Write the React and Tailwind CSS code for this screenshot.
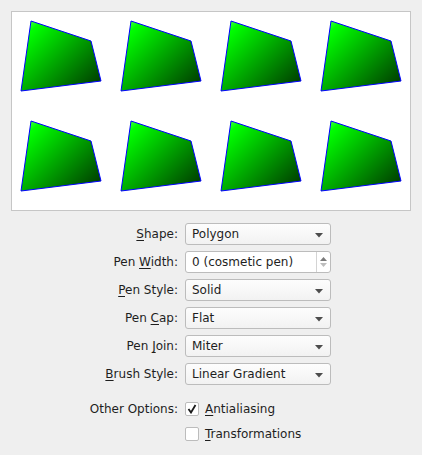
import React from 'react';

const cells = [];
for (let y = 0; y < 200; y += 100) {
  for (let x = 0; x < 400; x += 100) {
    cells.push([x, y]);
  }
}

const U = ({ children }) => (
  <span className="underline underline-offset-2 decoration-1">{children}</span>
);

const ComboArrow = () => (
  <svg width="8" height="5" viewBox="0 0 8 5" className="absolute right-[7px] top-[9px]">
    <path d="M0 0 L8 0 L4 4.5 Z" fill="#4d4d4d" />
  </svg>
);

const Combo = ({ value }) => (
  <div className="relative h-[22px] w-[146px] rounded-[3px] border border-[#bcbcbc] bg-gradient-to-b from-[#fdfdfd] to-[#f2f2f2] pl-[6px] leading-[20px]">
    {value}
    <ComboArrow />
  </div>
);

const SpinBox = ({ value }) => (
  <div className="relative flex h-[22px] w-[146px] rounded-[3px] border border-[#bcbcbc] bg-white">
    <div className="flex-1 pl-[6px] leading-[20px]">{value}</div>
    <div className="flex w-[14px] flex-col items-center justify-center gap-[2px] border-l border-[#d4d4d4]">
      <svg width="7" height="4" viewBox="0 0 7 4">
        <path d="M0 4 L7 4 L3.5 0 Z" fill="#7a7a7a" />
      </svg>
      <svg width="7" height="4" viewBox="0 0 7 4">
        <path d="M0 0 L7 0 L3.5 4 Z" fill="#bdbdbd" />
      </svg>
    </div>
  </div>
);

const CheckBox = ({ checked, children }) => (
  <div className="flex h-[19px] items-center gap-[6px]">
    <div className="flex h-[14px] w-[14px] items-center justify-center rounded-[2px] border border-[#bcbcbc] bg-white">
      {checked && (
        <svg width="10" height="10" viewBox="0 0 10 10">
          <path d="M1.5 5 L4 8.5 L8.5 1" fill="none" stroke="#1a1a1a" strokeWidth="1.8" />
        </svg>
      )}
    </div>
    <span>{children}</span>
  </div>
);

const Row = ({ label, children }) => (
  <>
    <div className="flex h-[22px] items-center justify-end">{label}</div>
    <div>{children}</div>
  </>
);

export default function App() {
  return (
    <div
      className="h-[455px] w-[422px] bg-[#efefef] pl-[11px] pt-[11px] text-[12px] text-[#1e1e1e]"
      style={{ fontFamily: '"DejaVu Sans", sans-serif' }}
    >
      <div className="h-[200px] w-[400px] border border-[#c6c6c6] bg-white">
        <svg width="398" height="198" viewBox="1 1 398 198" className="block">
          <defs>
            <linearGradient id="grad" gradientUnits="userSpaceOnUse" x1="0" y1="0" x2="100" y2="100">
              <stop offset="0" stopColor="#ffffff" />
              <stop offset="0.2" stopColor="#00ff00" />
              <stop offset="1" stopColor="#000000" />
            </linearGradient>
          </defs>
          {cells.map(([x, y]) => (
            <g key={`${x}-${y}`} transform={`translate(${x} ${y})`}>
              <polygon
                points="10,80 20,10 80,30 90,70"
                fill="url(#grad)"
                stroke="#0000ff"
                strokeWidth="1"
              />
            </g>
          ))}
        </svg>
      </div>

      <div className="mt-[12px] grid grid-cols-[167px_146px] gap-x-[7px] gap-y-[6px]">
        <Row label={<span><U>S</U>hape:</span>}>
          <Combo value="Polygon" />
        </Row>
        <Row label={<span>Pen <U>W</U>idth:</span>}>
          <SpinBox value="0 (cosmetic pen)" />
        </Row>
        <Row label={<span><U>P</U>en Style:</span>}>
          <Combo value="Solid" />
        </Row>
        <Row label={<span>Pen <U>C</U>ap:</span>}>
          <Combo value="Flat" />
        </Row>
        <Row label={<span>Pen <U>J</U>oin:</span>}>
          <Combo value="Miter" />
        </Row>
        <Row label={<span><U>B</U>rush Style:</span>}>
          <Combo value="Linear Gradient" />
        </Row>
      </div>

      <div className="mt-[14px] grid grid-cols-[167px_146px] gap-x-[7px] gap-y-[6px]">
        <div className="flex h-[19px] items-center justify-end">Other Options:</div>
        <CheckBox checked>
          <U>A</U>ntialiasing
        </CheckBox>
        <div />
        <CheckBox>
          <U>T</U>ransformations
        </CheckBox>
      </div>
    </div>
  );
}
